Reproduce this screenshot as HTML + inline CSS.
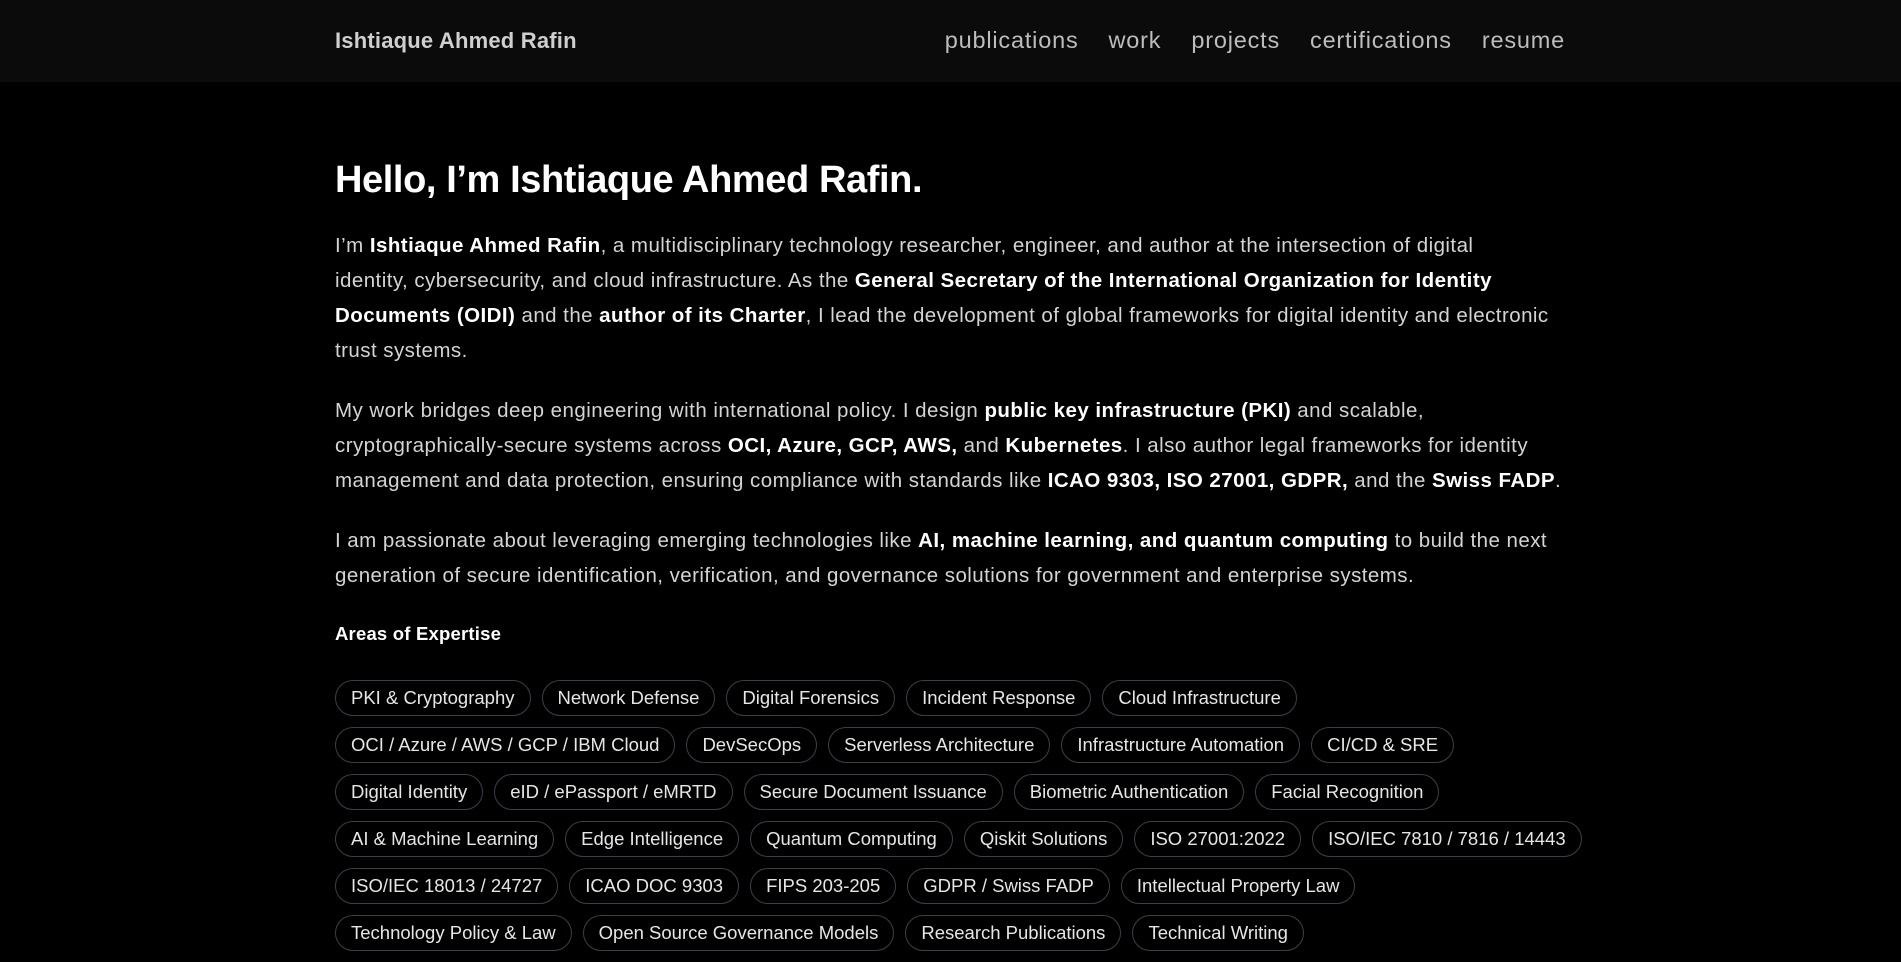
<!DOCTYPE html>
<html><head><meta charset="utf-8"><style>
*{margin:0;padding:0;box-sizing:border-box}
body{width:1901px;height:923px;overflow:hidden;background:#000;color:#d6d6d6;font-family:"Liberation Sans",sans-serif}
.nav{position:absolute;left:0;top:0;width:1901px;height:82px;background:#0b0b0b}
.brand{position:absolute;left:335px;top:28px;font-size:22px;font-weight:bold;color:#cfcfcf;letter-spacing:0.2px}
.links{position:absolute;right:336px;top:27px;font-size:23.5px;color:#bdbdbd;letter-spacing:0.8px}
.links span{margin-left:30px}
h1{position:absolute;left:335px;top:159px;font-size:38px;color:#fff;font-weight:bold;letter-spacing:-0.4px}
.p{position:absolute;left:335px;width:1240px;font-size:20.5px;line-height:35px;color:#d4d4d4;white-space:nowrap;letter-spacing:0.45px}
.p b{color:#fff}
.h3{position:absolute;left:335px;top:623px;font-size:18.5px;font-weight:bold;color:#fff;letter-spacing:0.2px}
.chips{position:absolute;left:335px;top:680px;width:1300px}
.row{display:flex;gap:11px;margin-bottom:11px}
.c{height:36px;line-height:34px;border:1px solid #3b4048;border-radius:18px;padding:0 15px;font-size:18.5px;color:#e6e6e6;white-space:nowrap;letter-spacing:0px}
</style></head><body>
<div class="nav"><div class="brand">Ishtiaque Ahmed Rafin</div>
<div class="links"><span>publications</span><span>work</span><span>projects</span><span>certifications</span><span>resume</span></div></div>
<h1>Hello, I’m Ishtiaque Ahmed Rafin.</h1>
<div class="p" style="top:228px">I’m <b>Ishtiaque Ahmed Rafin</b>, a multidisciplinary technology researcher, engineer, and author at the intersection of digital<br>identity, cybersecurity, and cloud infrastructure. As the <b>General Secretary of the International Organization for Identity</b><br><b>Documents (OIDI)</b> and the <b>author of its Charter</b>, I lead the development of global frameworks for digital identity and electronic<br>trust systems.</div>
<div class="p" style="top:393px">My work bridges deep engineering with international policy. I design <b>public key infrastructure (PKI)</b> and scalable,<br>cryptographically-secure systems across <b>OCI, Azure, GCP, AWS,</b> and <b>Kubernetes</b>. I also author legal frameworks for identity<br>management and data protection, ensuring compliance with standards like <b>ICAO 9303, ISO 27001, GDPR,</b> and the <b>Swiss FADP</b>.</div>
<div class="p" style="top:523px">I am passionate about leveraging emerging technologies like <b>AI, machine learning, and quantum computing</b> to build the next<br>generation of secure identification, verification, and governance solutions for government and enterprise systems.</div>
<div class="h3">Areas of Expertise</div>
<div class="chips">
<div class="row"><span class="c">PKI &amp; Cryptography</span><span class="c">Network Defense</span><span class="c">Digital Forensics</span><span class="c">Incident Response</span><span class="c">Cloud Infrastructure</span></div>
<div class="row"><span class="c">OCI / Azure / AWS / GCP / IBM Cloud</span><span class="c">DevSecOps</span><span class="c">Serverless Architecture</span><span class="c">Infrastructure Automation</span><span class="c">CI/CD &amp; SRE</span></div>
<div class="row"><span class="c">Digital Identity</span><span class="c">eID / ePassport / eMRTD</span><span class="c">Secure Document Issuance</span><span class="c">Biometric Authentication</span><span class="c">Facial Recognition</span></div>
<div class="row"><span class="c">AI &amp; Machine Learning</span><span class="c">Edge Intelligence</span><span class="c">Quantum Computing</span><span class="c">Qiskit Solutions</span><span class="c">ISO 27001:2022</span><span class="c">ISO/IEC 7810 / 7816 / 14443</span></div>
<div class="row"><span class="c">ISO/IEC 18013 / 24727</span><span class="c">ICAO DOC 9303</span><span class="c">FIPS 203-205</span><span class="c">GDPR / Swiss FADP</span><span class="c">Intellectual Property Law</span></div>
<div class="row"><span class="c">Technology Policy &amp; Law</span><span class="c">Open Source Governance Models</span><span class="c">Research Publications</span><span class="c">Technical Writing</span></div>
</div>
</body></html>
